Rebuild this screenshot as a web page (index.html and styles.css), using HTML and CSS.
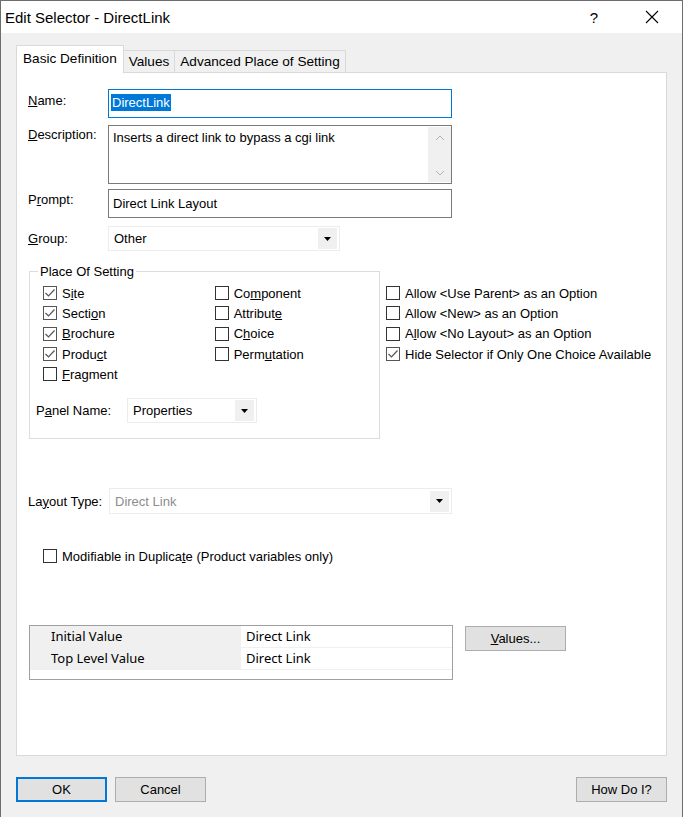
FILE: index.html
```html
<!DOCTYPE html>
<html lang="en">

<head>
    <meta charset="UTF-8">
    <title>Edit Selector - DirectLink</title>
    <link rel="stylesheet" href="styles.css">
</head>
<body>
    <div class="window">
        <div class="titlebar">
            <span class="title">Edit Selector - DirectLink</span>
            <span class="help">?</span>
            <svg class="close" width="14" height="14" viewBox="0 0 14 14"><path d="M1 1L13 13M13 1L1 13" stroke="#000" stroke-width="1.1" fill="none"/></svg>
        </div>

        <div class="tabs">
            <div class="tab active">Basic Definition</div>
            <div class="tab">Values</div>
            <div class="tab">Advanced Place of Setting</div>
        </div>

        <div class="panel">
            <div class="row row-name">
                <label class="lbl"><u>N</u>ame:</label>
                <div class="input focus"><span class="sel">DirectLink</span></div>
            </div>
            <div class="row row-desc">
                <label class="lbl"><u>D</u>escription:</label>
                <div class="input textarea">
                    <span class="txt">Inserts a direct link to bypass a cgi link</span>
                    <div class="vscroll">
                        <svg width="10" height="6" viewBox="0 0 10 6"><path d="M1 5L5 1L9 5" stroke="#b4b4b4" fill="none"/></svg>
                        <svg width="10" height="6" viewBox="0 0 10 6"><path d="M1 1L5 5L9 1" stroke="#b4b4b4" fill="none"/></svg>
                    </div>
                </div>
            </div>
            <div class="row row-prompt">
                <label class="lbl">P<u>r</u>ompt:</label>
                <div class="input">Direct Link Layout</div>
            </div>
            <div class="row row-group">
                <label class="lbl"><u>G</u>roup:</label>
                <div class="combo group-combo">
                    <span>Other</span>
                    <span class="arrow"><svg width="7" height="4" viewBox="0 0 7 4"><path d="M0 0H7L3.5 4Z" fill="#000"/></svg></span>
                </div>
            </div>

            <div class="place-row">
                <fieldset class="groupbox">
                    <legend>Place Of Setting</legend>
                    <div class="checks">
                        <div class="col">
                            <div class="cb"><span class="box on"></span>S<u>i</u>te</div>
                            <div class="cb"><span class="box on"></span>Secti<u>o</u>n</div>
                            <div class="cb"><span class="box on"></span><u>B</u>rochure</div>
                            <div class="cb"><span class="box on"></span>Produ<u>c</u>t</div>
                            <div class="cb"><span class="box"></span><u>F</u>ragment</div>
                        </div>
                        <div class="col col2">
                            <div class="cb"><span class="box"></span>Co<u>m</u>ponent</div>
                            <div class="cb"><span class="box"></span>Attribut<u>e</u></div>
                            <div class="cb"><span class="box"></span>C<u>h</u>oice</div>
                            <div class="cb"><span class="box"></span>Perm<u>u</u>tation</div>
                        </div>
                    </div>
                    <div class="panel-name">
                        <label>P<u>a</u>nel Name:</label>
                        <div class="combo panel-combo">
                            <span>Properties</span>
                            <span class="arrow"><svg width="7" height="4" viewBox="0 0 7 4"><path d="M0 0H7L3.5 4Z" fill="#000"/></svg></span>
                        </div>
                    </div>
                </fieldset>
                <div class="col options">
                    <div class="cb"><span class="box"></span>Allow &lt;Use Parent&gt; as an Option</div>
                    <div class="cb"><span class="box"></span>Allow &lt;New&gt; as an Option</div>
                    <div class="cb"><span class="box"></span>A<u>l</u>low &lt;No Layout&gt; as an Option</div>
                    <div class="cb"><span class="box on"></span>Hide Selector if Only One Choice Available</div>
                </div>
            </div>

            <div class="row row-layout">
                <label class="lbl-short">La<u>y</u>out Type:</label>
                <div class="combo layout-combo disabled">
                    <span>Direct Link</span>
                    <span class="arrow"><svg width="7" height="4" viewBox="0 0 7 4"><path d="M0 0H7L3.5 4Z" fill="#000"/></svg></span>
                </div>
            </div>

            <div class="cb dup"><span class="box"></span>Modifiable in Duplica<u>t</u>e (Product variables only)</div>

            <div class="values-row">
                <div class="grid">
                    <div class="grid-row">
                        <span class="key">Initial Value</span>
                        <span class="val">Direct Link</span>
                    </div>
                    <div class="grid-row">
                        <span class="key">Top Level Value</span>
                        <span class="val">Direct Link</span>
                    </div>
                </div>
                <button class="btn values-btn"><u>V</u>alues...</button>
            </div>
        </div>

        <div class="footer">
            <button class="btn default">OK</button>
            <button class="btn">Cancel</button>
            <span class="spacer"></span>
            <button class="btn">How Do I?</button>
        </div>
    </div>
</body>

</html>
```

FILE: styles.css
```css
* {
    box-sizing: border-box;
}

body {
    margin: 0;
    font-family: "Liberation Sans", Arial, sans-serif;
    font-size: 13px;
    color: #000;
}

.window {
    width: 683px;
    height: 817px;
    background-color: #f0f0f0;
    border: 1px solid #6d6d6d;
    border-bottom: none;
    position: relative;
}

.titlebar {
    height: 32px;
    background-color: #fff;
    display: flex;
    align-items: center;
    padding-left: 4px;
}

.title {
    font-size: 15px;
    flex: 1;
}

.help {
    font-size: 15px;
    margin-right: 47px;
}

.close {
    margin-right: 23px;
}

.tabs {
    display: flex;
    align-items: flex-end;
    height: 39px;
    padding-left: 15px;
    font-size: 13.6px;
}

.tab {
    height: 22px;
    padding: 3px 5px 0;
    background-color: #f0f0f0;
    border: 1px solid #d9d9d9;
    border-bottom: none;
    border-left: none;
}

.tab.active {
    height: 28px;
    padding: 5px 6px 0;
    background-color: #fff;
    border-left: 1px solid #d9d9d9;
    position: relative;
    top: 1px;
    z-index: 1;
}

.panel {
    margin: 0 15px;
    height: 684px;
    background-color: #fff;
    border: 1px solid #d9d9d9;
    padding: 16px 0 0 11px;
}

.row {
    display: flex;
    align-items: flex-start;
}

.row-name {
    margin-bottom: 7px;
}

.lbl {
    width: 80px;
    padding-top: 4px;
}

.input {
    width: 344px;
    height: 29px;
    border: 1px solid #7a7a7a;
    padding: 6px 4px;
    background-color: #fff;
}

.input.focus {
    border-color: #0078d7;
    padding-top: 5px;
    padding-left: 2px;
}

.sel {
    background-color: #0078d7;
    color: #fff;
    padding: 1px 1px;
}

.textarea {
    height: 59px;
    display: flex;
    justify-content: space-between;
    padding: 4px 0 0 4px;
}

.vscroll {
    width: 23px;
    height: 55px;
    margin-top: -3px;
    background-color: #f0f0f0;
    display: flex;
    flex-direction: column;
    justify-content: space-between;
    align-items: center;
    padding: 8px 0 6px;
}

.row-desc {
    margin-bottom: 5px;
}

.row-desc .lbl {
    padding-top: 2px;
}

.row-prompt {
    margin-bottom: 8px;
}

.row-prompt .lbl {
    padding-top: 3px;
}

.combo {
    height: 26px;
    background-color: #fff;
    border: 1px solid #ececec;
    display: flex;
    align-items: center;
    justify-content: space-between;
    padding: 0 2px 0 5px;
}

.arrow {
    width: 19px;
    height: 21px;
    background-color: #f0f0f0;
    display: flex;
    align-items: center;
    justify-content: center;
}

.group-combo {
    width: 232px;
    height: 25px;
}

.row-group {
    align-items: center;
}

.row-group .lbl {
    padding-top: 0;
}

.place-row {
    display: flex;
    align-items: flex-start;
    margin-top: 13px;
}

.groupbox {
    width: 351px;
    height: 175px;
    margin: 0 0 0 1px;
    border: 1px solid #dcdcdc;
    padding: 0 0 0 13px;
}

.groupbox legend {
    padding: 0 2px;
    margin-left: -5px;
}

.checks {
    display: flex;
    margin-top: 4px;
}

.col {
    display: flex;
    flex-direction: column;
}

.col2 {
    margin-left: 97px;
}

.cb {
    display: flex;
    align-items: center;
    height: 20.3px;
    white-space: nowrap;
}

.box {
    width: 14px;
    height: 14px;
    border: 1px solid #333;
    background-color: #fff;
    margin-right: 5px;
    flex: none;
}

.box.on {
    border-color: #555;
    background: #fff url("data:image/svg+xml;utf8,<svg xmlns='http://www.w3.org/2000/svg' width='12' height='12' viewBox='0 0 12 12'><path d='M1.5 6L4.5 9L10.5 2.5' stroke='%23555' stroke-width='1.2' fill='none'/></svg>") no-repeat center;
}

.panel-name {
    display: flex;
    align-items: center;
    margin-top: 14px;
    margin-left: -7px;
}

.panel-name label {
    width: 91px;
}

.panel-combo {
    width: 130px;
    height: 25px;
}

.options {
    margin-left: 6px;
    margin-top: 19px;
}

.row-layout {
    margin-top: 49px;
    align-items: center;
}

.lbl-short {
    width: 81px;
}

.layout-combo {
    width: 343px;
}

.disabled span:first-child {
    color: #8c8c8c;
}

.dup {
    margin: 32px 0 0 15px;
}

.values-row {
    display: flex;
    align-items: flex-start;
    margin-top: 59px;
    margin-left: 1px;
}

.grid {
    width: 424px;
    height: 55px;
    border: 1px solid #a0a0a0;
    font-family: "Noto Sans", "Open Sans", sans-serif;
    font-size: 13px;
}

.grid-row {
    display: flex;
    height: 22px;
    border-bottom: 1px solid #f0f0f0;
}

.key {
    width: 211px;
    background-color: #f0f0f0;
    padding-left: 21px;
    line-height: 21px;
}

.val {
    padding-left: 5px;
    line-height: 21px;
}

.btn {
    font-family: "Liberation Sans", Arial, sans-serif;
    font-size: 13px;
    width: 91px;
    height: 25px;
    background-color: #e1e1e1;
    border: 1px solid #adadad;
    color: #000;
    padding: 0;
}

.values-btn {
    width: 101px;
    margin-left: 12px;
    margin-top: 1px;
}

.footer {
    display: flex;
    padding: 21px 15px 0 15px;
    gap: 8px;
}

.btn.default {
    border: 2px solid #0078d7;
}

.spacer {
    flex: 1;
}
```
